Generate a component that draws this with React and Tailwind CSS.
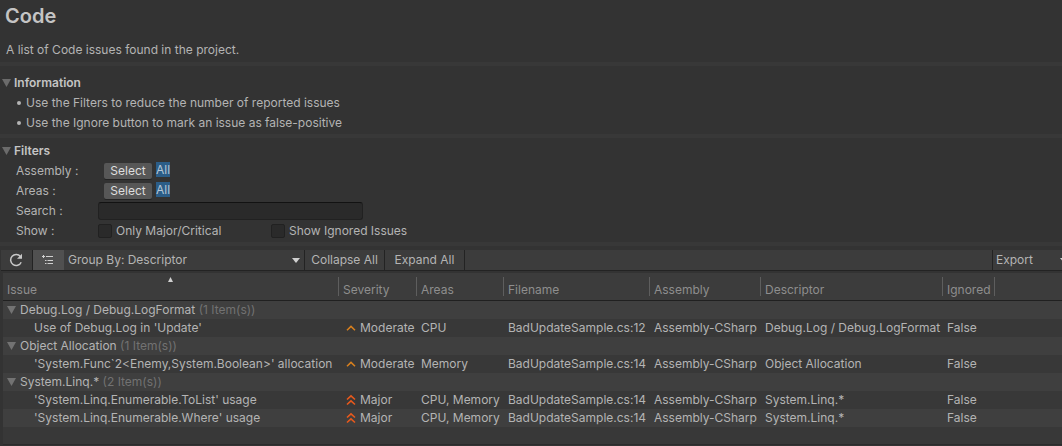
import { useState } from 'react';

const COLUMNS = [
  { key: 'issue', label: 'Issue', width: 'w-[336px]' },
  { key: 'severity', label: 'Severity', width: 'w-[78px]' },
  { key: 'areas', label: 'Areas', width: 'w-[87px]' },
  { key: 'filename', label: 'Filename', width: 'w-[146px]' },
  { key: 'assembly', label: 'Assembly', width: 'w-[111px]' },
  { key: 'descriptor', label: 'Descriptor', width: 'w-[182px]' },
  { key: 'ignored', label: 'Ignored', width: 'w-[52px]' },
];

const GROUPS = [
  {
    name: 'Debug.Log / Debug.LogFormat',
    items: [
      { issue: "Use of Debug.Log in 'Update'", severity: 'Moderate', areas: 'CPU', filename: 'BadUpdateSample.cs:12' },
    ],
  },
  {
    name: 'Object Allocation',
    items: [
      { issue: "'System.Func`2<Enemy,System.Boolean>' allocation", severity: 'Moderate', areas: 'Memory', filename: 'BadUpdateSample.cs:14' },
    ],
  },
  {
    name: 'System.Linq.*',
    items: [
      { issue: "'System.Linq.Enumerable.ToList' usage", severity: 'Major', areas: 'CPU, Memory', filename: 'BadUpdateSample.cs:14' },
      { issue: "'System.Linq.Enumerable.Where' usage", severity: 'Major', areas: 'CPU, Memory', filename: 'BadUpdateSample.cs:14' },
    ],
  },
];

function Triangle({ className, closed }) {
  return (
    <svg viewBox="0 0 9 8" preserveAspectRatio="none" className={`shrink-0 ${className} ${closed ? '-rotate-90' : ''}`} fill="currentColor" aria-hidden="true">
      <path d="M0 0h9L4.500 8z" />
    </svg>
  );
}

function SeverityIcon({ severity }) {
  if (severity === 'Major') {
    return (
      <svg viewBox="0 0 10 12" className="w-[10px] h-3 shrink-0 text-[#e8591c]" fill="none" stroke="currentColor" strokeWidth="1.6" aria-hidden="true">
        <path d="M1 5.500L5 1.800l4 3.700M1 10.500l4-3.700 4 3.700" />
      </svg>
    );
  }
  return (
    <svg viewBox="0 0 10 12" className="w-[10px] h-3 shrink-0 text-[#d9801e]" fill="none" stroke="currentColor" strokeWidth="1.500" aria-hidden="true">
      <path d="M1 8.200l4-3.800 4 3.800" />
    </svg>
  );
}

function Section({ title, children }) {
  const [open, setOpen] = useState(true);

  return (
    <section className="border-b-4 border-[#383838] pt-[3px] pb-[1px]">
      <h2>
        <button onClick={() => setOpen(!open)} aria-expanded={open} className="flex items-center gap-[3px] h-5 pl-[2px] font-semibold text-[#c4c4c4]">
          <Triangle className="w-[9px] h-2 text-[#6b6b6b]" closed={!open} />
          {title}
        </button>
      </h2>
      {open && children}
    </section>
  );
}

function Bullet({ children }) {
  return (
    <li className="flex items-center gap-1 h-5">
      <span className="w-[6px] h-5 flex items-center justify-center">
        <span className="w-1 h-1 rounded-full bg-[#b4b4b4]"></span>
      </span>
      {children}
    </li>
  );
}

function SelectRow({ label }) {
  return (
    <div className="flex h-5 pl-4">
      <span className="w-[88px] leading-5">{label} :</span>
      <button aria-label={`Select ${label}`} className="w-12 h-4 mt-[2px] rounded-[2px] bg-[#575757] text-[#dedede] leading-4 shadow-[0_1px_0_#242424]">Select</button>
      <span className="h-[15px] ml-1 mt-[1px] bg-[#2c5d87] text-[#b4c6d6] leading-[15px]">All</span>
    </div>
  );
}

function CheckOption({ label, className }) {
  return (
    <label className={`flex items-center gap-1 ${className}`}>
      <input type="checkbox" className="appearance-none w-[14px] h-[14px] rounded-[2px] border border-[#212121] bg-[#2a2a2a] checked:bg-[#8a8a8a]" />
      {label}
    </label>
  );
}

function Toolbar({ onCollapse, onExpand }) {
  return (
    <div className="flex h-[21px] mt-1 ml-[1px] bg-[#3c3c3c] border-b border-[#232323] whitespace-nowrap overflow-hidden">
      <button aria-label="Refresh" className="w-8 shrink-0 flex items-center justify-center pr-[2px] border-r border-[#232323] text-[#c8c8c8]">
        <svg viewBox="0 0 14 14" className="w-[14px] h-[14px]" fill="none" stroke="currentColor" strokeWidth="1.500" aria-hidden="true">
          <path d="M12.200 9.200A5.500 5.500 0 1 1 11.500 3.600" />
          <path d="M13 .8v5H8z" fill="currentColor" stroke="none" />
        </svg>
      </button>
      <button aria-label="Show hierarchy" className="w-[31px] shrink-0 flex items-center justify-center pr-[2px] bg-[#505050] text-[#d0d0d0]">
        <svg viewBox="0 0 12 10" className="w-3 h-[10px]" fill="none" stroke="currentColor" aria-hidden="true">
          <path d="M0 1.500h3M1.500 0v3M4 1.500h7M3 5.500h1.500M5.500 5.500H11M3 8.500h1.500M5.500 8.500H11" />
        </svg>
      </button>
      <div className="w-[241px] shrink-0 relative border-r border-[#232323]">
        <select aria-label="Group by" className="appearance-none w-full h-5 pl-1 bg-transparent outline-none">
          <option>Group By: Descriptor</option>
          <option>Group By: Severity</option>
          <option>Group By: Assembly</option>
        </select>
        <Triangle className="absolute right-1 top-2 w-2 h-[5px] text-[#d0d0d0] pointer-events-none" />
      </div>
      <button onClick={onCollapse} className="w-20 shrink-0 border-r border-[#232323] leading-5">Collapse All</button>
      <button onClick={onExpand} className="w-20 shrink-0 border-r border-[#232323] leading-5">Expand All</button>
      <button className="w-[70px] shrink-0 ml-auto pl-[3px] flex items-center gap-[27px] border-l border-[#232323] overflow-hidden leading-5">
        Export
        <Triangle className="w-2 h-[5px] text-[#d0d0d0]" />
      </button>
    </div>
  );
}

function GroupRows({ group, open, onToggle, startIndex }) {
  const stripe = (i) => (i % 2 === 0 ? 'bg-[#3f3f3f]' : 'bg-[#383838]');

  return (
    <>
      <tr className="h-[18px] bg-[#3f3f3f]">
        <td colSpan={8}>
          <button onClick={onToggle} aria-expanded={open} className="flex items-center h-[18px] pl-1 gap-1">
            <Triangle className="w-[9px] h-2 text-[#737373]" closed={!open} />
            <span>{group.name} <span className="text-[#727272]">({group.items.length} Item(s))</span></span>
          </button>
        </td>
      </tr>
      {open && group.items.map((item, i) => (
        <tr key={item.issue} className={`h-[18px] ${stripe(startIndex + i + 1)}`}>
          <td className="pl-[31px]">{item.issue}</td>
          <td className="pl-1">
            <div className="flex items-center gap-1 pl-[3px]">
              <SeverityIcon severity={item.severity} />
              {item.severity}
            </div>
          </td>
          <td className="pl-1">{item.areas}</td>
          <td className="pl-1">{item.filename}</td>
          <td className="pl-1">Assembly-CSharp</td>
          <td className="pl-1">{group.name}</td>
          <td className="pl-1">False</td>
          <td></td>
        </tr>
      ))}
    </>
  );
}

export default function App() {
  const [closed, setClosed] = useState([]);

  const toggle = (name) => {
    setClosed(closed.includes(name) ? closed.filter((n) => n !== name) : [...closed, name]);
  };

  return (
    <main className="min-h-screen flex flex-col bg-[#333333] text-[#b4b4b4] text-xs font-['Inter',sans-serif] overflow-hidden">
      <header className="mb-1 border-b-4 border-[#383838] px-[5px] pt-1 pb-[2px]">
        <h1 className="text-xl leading-6 font-semibold text-[#c4c4c4]">Code</h1>
        <p className="mt-3 pl-[1px] leading-5">A list of Code issues found in the project.</p>
      </header>

      <Section title="Information">
        <ul className="pl-4">
          <Bullet>Use the Filters to reduce the number of reported issues</Bullet>
          <Bullet>Use the Ignore button to mark an issue as false-positive</Bullet>
        </ul>
      </Section>

      <Section title="Filters">
        <SelectRow label="Assembly" />
        <SelectRow label="Areas" />
        <div className="flex items-center h-5 pl-4">
          <label htmlFor="search" className="w-[82px]">Search :</label>
          <input id="search" type="text" className="w-[265px] h-[18px] px-1 rounded-[3px] border border-[#212121] border-t-[#121212] bg-[#2a2a2a] outline-none" />
        </div>
        <div className="flex items-center h-5 pl-4">
          <span className="w-[82px]">Show :</span>
          <CheckOption label="Only Major/Critical" className="w-[173px]" />
          <CheckOption label="Show Ignored Issues" />
        </div>
      </Section>

      <Toolbar onCollapse={() => setClosed(GROUPS.map((g) => g.name))} onExpand={() => setClosed([])} />

      <div className="flex-1 mt-[2px] ml-[3px] mb-[1px] bg-[#383838] border-b border-[#2c2c2c]">
        <table className="w-full table-fixed border-collapse whitespace-nowrap text-left leading-[18px]">
          <thead>
            <tr className="h-[27px] bg-[#3c3c3c] border-b border-[#202020] text-[#8e8e8e]">
              {COLUMNS.map((col) => (
                <th key={col.key} className={`${col.width} font-normal p-0`}>
                  <div className="relative h-[19px] pt-1 pl-1 border-r border-[#5e5e5e]">
                    {col.label}
                    {col.key === 'issue' && (
                      <Triangle className="absolute top-0 left-[165px] w-[5px] h-[5px] rotate-180 text-[#d0d0d0]" />
                    )}
                  </div>
                </th>
              ))}
              <th></th>
            </tr>
          </thead>
          <tbody>
            {GROUPS.map((group, i) => (
              <GroupRows
                key={group.name}
                group={group}
                open={!closed.includes(group.name)}
                onToggle={() => toggle(group.name)}
                startIndex={i * 2}
              />
            ))}
          </tbody>
        </table>
      </div>
    </main>
  );
}
